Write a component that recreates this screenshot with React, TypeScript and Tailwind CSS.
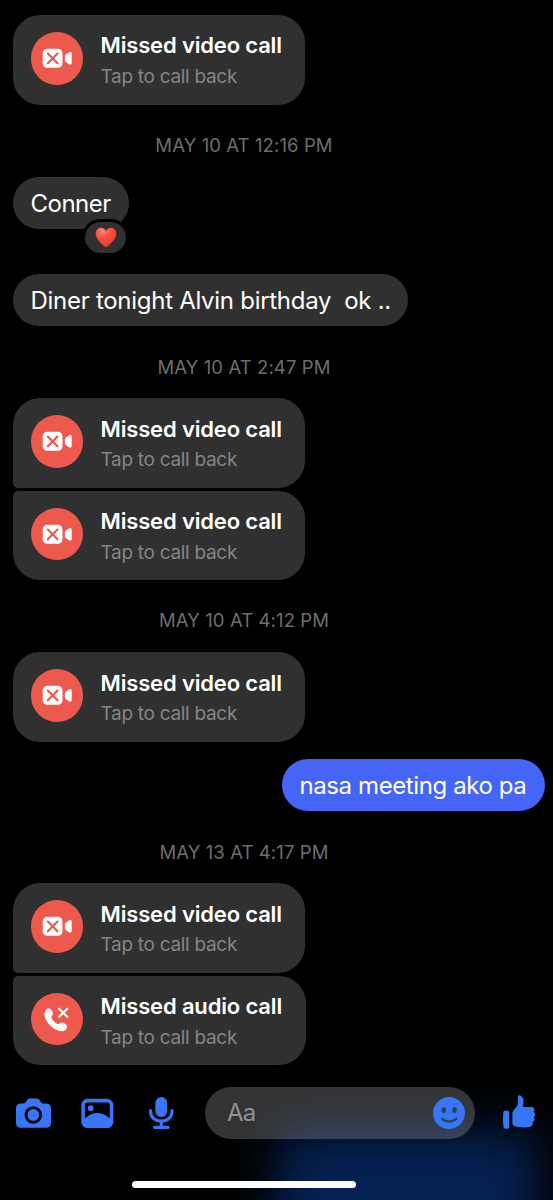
import type { ReactNode } from "react";

const VideoIcon = () => (
  <svg className="h-[52.5px] w-[52.5px]" viewBox="0 0 53 53" fill="none">
    <rect x="11.8" y="17" width="20" height="19.2" rx="4.6" fill="#fff" />
    <path d="M34.200 25c0-1 .4-1.700 1.200-2.300l3-2.100c1.200-.7 2.700-.2 2.700 1v10c0 1.200-1.500 1.700-2.700 1l-3-2.100c-.8-.6-1.200-1.300-1.200-2.300z" fill="#fff" />
    <path d="M17 21.800l9.800 9.800M26.800 21.800L17 31.600" stroke="#ee594d" strokeWidth="2.200" strokeLinecap="round" />
  </svg>
);

const PhoneIcon = () => (
  <svg className="h-[52.5px] w-[52.5px]" viewBox="0 0 53 53" fill="none">
    <path
      d="M14.900 17.300c1.500-2.200 4.300-2.300 5.800-.1l1 1.700c.8 1.600.5 3-.6 4.300-.7.900-.7 1.600-.2 2.500 1.300 2.100 3.200 4 5.300 5.300.9.500 1.700.4 2.500-.3 1.400-1.100 2.900-1.200 4.400-.3l1.600 1c2.100 1.500 2.100 4.200.1 5.600-2.200 1.700-4.800 1.900-7.500.9-6.300-2.400-10.800-7.100-13.100-13.200-1-2.700-.9-5.200.7-7.400z"
      fill="#fff"
    />
    <path d="M28.400 15.800l8.200 8.200M36.600 15.800l-8.200 8.200" stroke="#fff" strokeWidth="2.200" strokeLinecap="round" />
  </svg>
);

function CallCard({ audio, corners = "" }: { audio?: boolean; corners?: string }) {
  return (
    <div
      className={`flex h-[89.5px] items-start rounded-[27px] bg-[#303030] pl-[17.5px] pt-[17px] ${
        audio ? "w-[293px]" : "w-[292px]"
      } ${corners}`}
    >
      <div className="h-[52.5px] w-[52.5px] shrink-0 rounded-full bg-[#ee594d]">
        {audio ? <PhoneIcon /> : <VideoIcon />}
      </div>
      <div className="-mt-[0.6px] ml-[17.5px] whitespace-nowrap">
        <div className="text-[22px] font-semibold leading-[28px] tracking-[-0.16px] text-white">
          {audio ? "Missed audio call" : "Missed video call"}
        </div>
        <div className="mt-[4.4px] text-[19px] leading-[26px] tracking-[-0.3px] text-[#858585]">Tap to call back</div>
      </div>
    </div>
  );
}

const Stamp = ({ children, className }: { children: ReactNode; className: string }) => (
  <div
    className={`w-[475px] pr-[13px] text-center text-[18.5px] leading-[24px] tracking-[0.1px] text-[#6d6d6d] ${className}`}
  >
    {children}
  </div>
);

const Bubble = ({ children, className }: { children: ReactNode; className: string }) => (
  <div
    className={`h-[52px] whitespace-pre rounded-full pl-[17.5px] pt-[0.5px] text-[24px] leading-[52px] text-white ${className}`}
  >
    {children}
  </div>
);

const Heart = () => (
  <svg className="h-[21px] w-[22px]" viewBox="0 0 22 21">
    <defs>
      <radialGradient id="heart" cx="0.35" cy="0.15" r="0.9">
        <stop offset="0" stopColor="#ff8a78" />
        <stop offset="0.35" stopColor="#f95642" />
        <stop offset="1" stopColor="#df3528" />
      </radialGradient>
    </defs>
    <path
      d="M11 20.500C7 17.500.7 12.400.7 6.500.7 3.200 3 .8 5.900.8 8.200.8 10 2 11 4.200 12 2 13.800.8 16.100.8c2.900 0 5.200 2.400 5.200 5.700 0 5.900-6.300 11-10.300 14z"
      fill="url(#heart)"
    />
  </svg>
);

function Composer() {
  return (
    <div className="flex h-[52px] items-center">
      <svg className="ml-[15px] h-[36px] w-[36px]" viewBox="0 0 36 36">
        <path
          d="M6 8.400h1.600c1.500 0 2.300-.5 3.100-1.500l.8-1C12.300 4.400 13.200 3.400 14.500 3.400h7.600c1.300 0 2.200 1 3 2.500l.8 1c.8 1 1.600 1.500 3.100 1.500h2c3.200 0 5 1.800 5 5v14.400c0 3.200-1.800 5-5 5H6c-3.200 0-5-1.800-5-5V13.400c0-3.200 1.800-5 5-5z"
          fill="#3776f7"
        />
        <circle cx="18.300" cy="20" r="7.300" fill="#3776f7" stroke="#000" strokeWidth="2.800" />
      </svg>
      <svg className="ml-[28px] h-[36px] w-[36px]" viewBox="0 0 36 36" fill="#3776f7">
        <rect x="4.100" y="5.600" width="28.500" height="25.600" rx="4.500" fill="none" stroke="#3776f7" strokeWidth="3.600" />
        <circle cx="11.700" cy="13.200" r="2.900" />
        <path d="M3.500 24.500c4.500-2 7.500-6.600 15-6.600 7 0 10 4.100 14.500 6.600v3c0 3-1 4-4 4h-22c-3 0-3.500-1-3.500-4z" />
      </svg>
      <svg className="ml-[27px] h-[36px] w-[36px]" viewBox="0 0 36 36" fill="none" stroke="#3776f7">
        <rect x="13.400" y="2" width="11.800" height="20" rx="5.900" fill="#3776f7" stroke="none" />
        <path d="M8.600 15.500v1.300c0 5.600 4.500 9.300 10.700 9.300S30 22.400 30 16.800v-1.300" strokeWidth="3.200" strokeLinecap="round" />
        <path d="M19.300 26.500v5M12.600 32.400h13.400" strokeWidth="3.200" strokeLinecap="round" />
      </svg>
      <div className="ml-[27px] flex h-[52px] w-[270px] items-center justify-between rounded-full bg-white/20 pl-[22px] pr-[10px]">
        <span className="text-[24px] tracking-[-0.8px] text-[#919294]">Aa</span>
        <svg className="h-[32px] w-[32px]" viewBox="0 0 32 32">
          <circle cx="16" cy="16" r="16" fill="#3776f7" />
          <ellipse cx="10.800" cy="13" rx="2.300" ry="3.100" fill="#2c405f" />
          <ellipse cx="21.600" cy="13" rx="2.300" ry="3.100" fill="#2c405f" />
          <path d="M9.200 21.700c3.400 3.700 10.400 3.700 13.900 0" stroke="#2c405f" strokeWidth="2.400" strokeLinecap="round" fill="none" />
        </svg>
      </div>
      <svg className="ml-[26px] h-[36px] w-[36px]" viewBox="0 0 36 36" fill="#3776f7">
        <path d="M3.700 15.800h2.800c1.200 0 1.800.7 1.800 1.800v14.500c0 1-.6 1.600-1.600 1.600H4.400c-1 0-1.700-.6-1.900-1.700-.6-4.700-.6-9.400-.2-14.500.1-1.100.6-1.700 1.400-1.700z" />
        <path d="M16.900 1.600c.1-1.300 1.200-1.800 2.500-1.200 3 1.500 3.800 5 2.600 9.300-.3 1.300-.2 2.200 1.300 2.200H30c2.200 0 3.500 1.200 3.500 2.900 0 .9-.3 1.600-.8 2.100 1.200.8 1.700 2.200 1.300 3.600-.2.800-.6 1.300-1.200 1.700.7.900.9 2 .5 3.100-.3.900-.9 1.500-1.700 1.800.4 1 .3 2-.2 2.900-.9 1.600-2.700 2.200-5 2.300-4.600.4-9 .1-12.500-1-1.900-.6-2.500-1.700-2.500-3.600V19c0-2.300.8-3.600 2.400-5.100 2.300-2.300 3.200-4 3.200-6.800z" />
      </svg>
    </div>
  );
}

export default function App() {
  return (
    <div className="relative isolate flex h-[1200px] w-[553px] flex-col overflow-hidden bg-black font-['Inter','Liberation_Sans',sans-serif]">
      <div className="absolute -bottom-[80px] left-[276px] -z-10 h-[149px] w-[262px] rounded-[20px] bg-[#042152] blur-[24px]" />
      <div className="flex flex-col items-start pl-[13px] pt-[15px]">
        <CallCard />
        <Stamp className="mt-[28.5px]">MAY 10 AT 12:16 PM</Stamp>
        <div className="relative mt-[20px]">
          <Bubble className="w-[116px] bg-[#303030] tracking-[-0.5px]">Conner</Bubble>
          <div className="absolute left-[69px] top-[42px] flex h-[37px] w-[47px] items-center justify-center rounded-full border-[3px] border-black bg-[#303030]">
            <Heart />
          </div>
        </div>
        <Bubble className="mt-[45px] w-[395px] bg-[#303030] tracking-[-0.28px]">Diner tonight Alvin birthday  ok ..</Bubble>
        <Stamp className="mt-[28.5px]">MAY 10 AT 2:47 PM</Stamp>
        <div className="mt-[19.8px] flex flex-col gap-[3px]">
          <CallCard corners="rounded-bl-[5px]" />
          <CallCard corners="rounded-tl-[5px]" />
        </div>
        <Stamp className="mt-[28.2px]">MAY 10 AT 4:12 PM</Stamp>
        <div className="mt-[20px]">
          <CallCard />
        </div>
      </div>
      <div className="mt-[17.2px] flex justify-end pr-[8px]">
        <Bubble className="w-[263px] bg-[#4565f7] tracking-[-0.4px]">nasa meeting ako pa</Bubble>
      </div>
      <div className="flex flex-col items-start pl-[13px]">
        <Stamp className="mt-[28.8px]">MAY 13 AT 4:17 PM</Stamp>
        <div className="mt-[19.5px] flex flex-col gap-[3px]">
          <CallCard corners="rounded-bl-[5px]" />
          <CallCard audio corners="rounded-tl-[5px]" />
        </div>
      </div>
      <div className="mt-[21.5px]">
        <Composer />
      </div>
      <div className="ml-[132px] mt-[42px] h-[7px] w-[224px] rounded-full bg-white" />
    </div>
  );
}
